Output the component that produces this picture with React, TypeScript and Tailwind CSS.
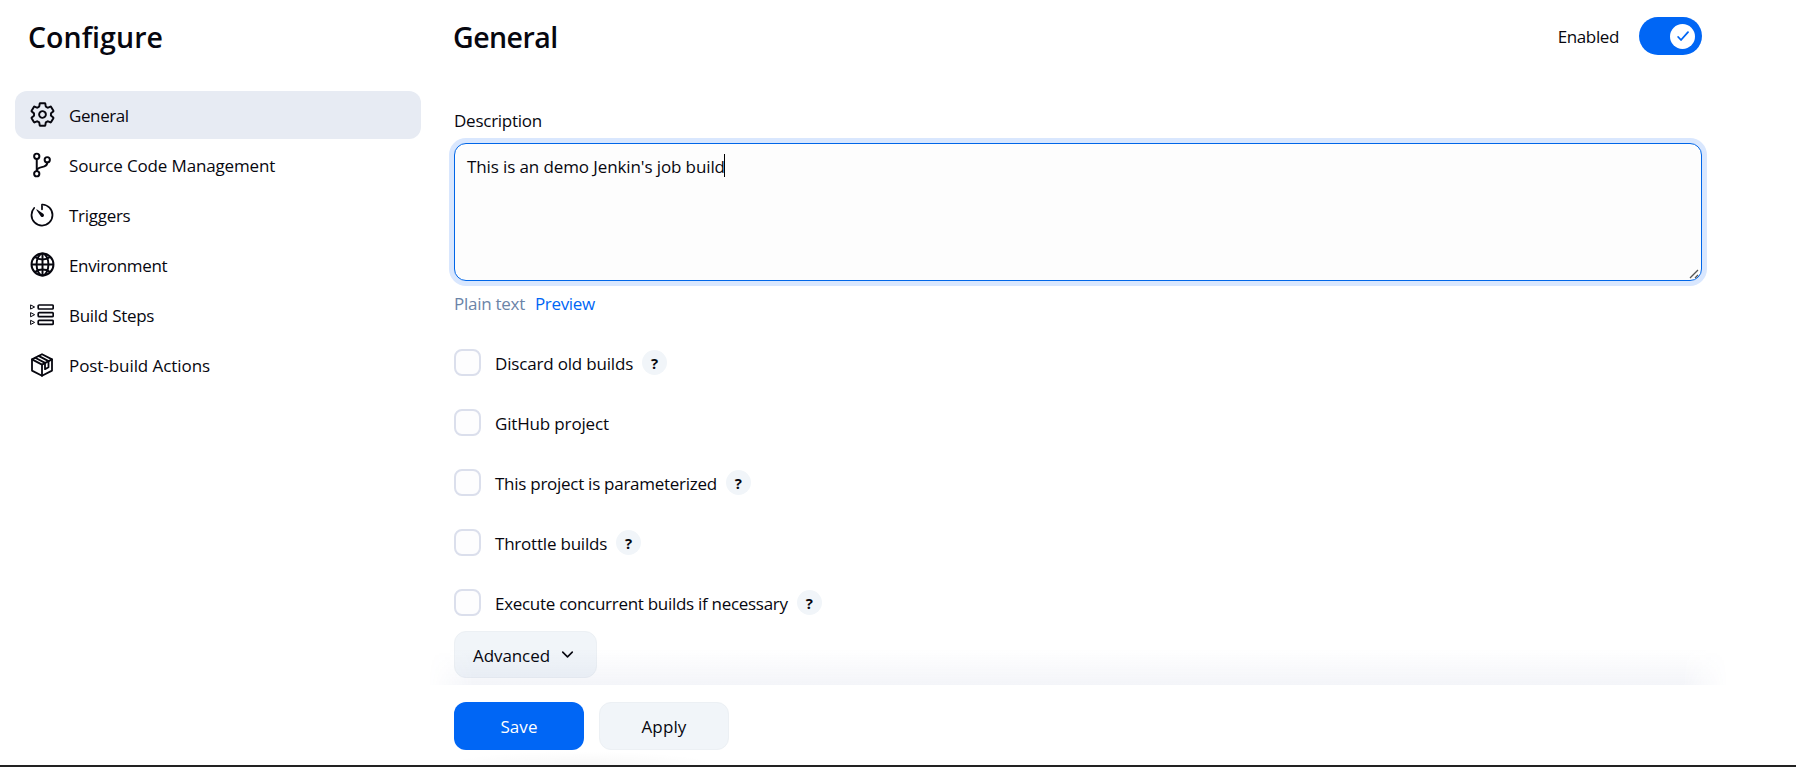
import type { ReactNode } from "react";
import {
  IoSettingsOutline,
  IoGitBranchOutline,
  IoTimerOutline,
  IoGlobeOutline,
  IoChevronDown,
} from "react-icons/io5";

function StepsIcon() {
  return (
    <svg viewBox="0 0 24 24" className="size-6 shrink-0" fill="none" stroke="currentColor" strokeWidth="1.7" strokeLinejoin="round">
      <rect x="8.2" y="2" width="15" height="4" rx="1" />
      <rect x="8.2" y="9.7" width="15" height="4" rx="1" />
      <rect x="8.2" y="17.4" width="15" height="4" rx="1" />
      <path strokeWidth="1" d="M.6 1.9v4.2L4.6 4zM.6 9.6v4.2l4-2.1zM.6 17.3v4.2l4-2.1z" />
    </svg>
  );
}

function PackageIcon() {
  return (
    <svg viewBox="0 0 24 24" className="size-6 shrink-0" fill="none" stroke="currentColor" strokeWidth="1.8" strokeLinejoin="round" strokeLinecap="round">
      <path d="M12 1.2 22 6.4v11.2l-10 5.2-10-5.2V6.4z" />
      <path d="m2 6.4 10 5.2 10-5.2M12 11.6v11.2" />
      <path d="m5.2 4.7 9.8 5.200v6.300l3.500-2V8.100L8.600 2.900" />
    </svg>
  );
}

type Item = { label: string; tracking: string; icon: ReactNode; active?: boolean };

const items: Item[] = [
  { label: "General", tracking: "tracking-[-0.4px]", icon: <IoSettingsOutline className="size-[27px] shrink-0 *:stroke-[37px]" />, active: true },
  { label: "Source Code Management", tracking: "tracking-[-0.15px]", icon: <IoGitBranchOutline className="size-[28px] shrink-0 *:stroke-[36px]" /> },
  { label: "Triggers", tracking: "tracking-[-0.28px]", icon: <IoTimerOutline className="size-[28px] shrink-0" /> },
  { label: "Environment", tracking: "tracking-[-0.35px]", icon: <IoGlobeOutline className="size-[27px] shrink-0 *:stroke-[37px]" /> },
  { label: "Build Steps", tracking: "tracking-[-0.28px]", icon: <StepsIcon /> },
  { label: "Post-build Actions", tracking: "tracking-[-0.07px]", icon: <PackageIcon /> },
];

const options = [
  { label: "Discard old builds", tracking: "tracking-[-0.18px]", help: true },
  { label: "GitHub project", tracking: "tracking-[-0.16px]", help: false },
  { label: "This project is parameterized", tracking: "tracking-[-0.27px]", help: true },
  { label: "Throttle builds", tracking: "tracking-[-0.21px]", help: true },
  { label: "Execute concurrent builds if necessary", tracking: "tracking-[-0.29px]", help: true },
];

function Sidebar() {
  return (
    <aside className="ml-[15px] w-[406px] shrink-0">
      <h1 className="mt-[17px] pl-[13px] text-[28.5px] leading-10 font-semibold tracking-[0.06px]">Configure</h1>
      <nav className="mt-[34px] flex flex-col gap-0.5">
        {items.map((item) => (
          <a
            key={item.label}
            className={`flex h-12 items-center rounded-xl pl-3.5 ${item.active ? "bg-[#e7ebf3]" : ""}`}
          >
            <span className="-mt-px flex w-[26px] justify-center">{item.icon}</span>
            <span className={`pt-0.5 pl-3.5 ${item.tracking}`}>{item.label}</span>
          </a>
        ))}
      </nav>
    </aside>
  );
}

function Option({ label, tracking, help }: { label: string; tracking: string; help: boolean }) {
  return (
    <div className="flex h-[27px] items-center">
      <span className="size-[27px] rounded-lg border-2 border-[#dbdfec] bg-[#fdfdfe]" />
      <span className={`pt-0.5 pl-3.5 ${tracking}`}>{label}</span>
      {help && (
        <span className="ml-[9px] flex size-[25px] items-center justify-center rounded-full bg-[#f1f5f9] text-[15px] font-bold">
          ?
        </span>
      )}
    </div>
  );
}

export default function App() {
  return (
    <div className="flex h-[767px] w-[1796px] flex-col overflow-hidden border-b-2 border-[#222] bg-white font-['Open_Sans','Noto_Sans',sans-serif] text-[17px] leading-6 text-[#07070f]">
      <div className="flex h-[685px] shrink-0 overflow-hidden">
        <Sidebar />
        <main className="ml-[33px] w-[1248px]">
          <header className="mt-[17px] flex h-[38px] items-center justify-between">
            <h2 className="-ml-px pt-0.5 text-[28.5px] leading-10 font-semibold tracking-[-0.55px]">General</h2>
            <div className="flex items-center">
              <span className="pt-0.5 tracking-[-0.38px]">Enabled</span>
              <span className="ml-5 flex h-[38px] w-[63px] items-center justify-end rounded-full bg-[#0066f5] pr-[7px]">
                <span className="flex size-[25px] items-center justify-center rounded-full bg-white text-[#0066f5]">
                  <svg viewBox="0 0 12 12" className="size-3" fill="none" stroke="currentColor" strokeWidth="1.8" strokeLinecap="round" strokeLinejoin="round">
                    <path d="M1.2 7 4 10l7-7.8" />
                  </svg>
                </span>
              </span>
            </div>
          </header>

          <div className="mt-[54px] tracking-[-0.25px]">Description</div>
          <div className="relative mt-2.5 flex h-[138px] rounded-xl border border-[#0066e8] bg-[#fdfdfd] px-3 pt-[11px] shadow-[0_0_0_5px_#d9e7fe]">
            <span className="tracking-[-0.11px]">This is an demo Jenkin's job build</span>
            <span className="-mt-px -ml-px h-[23px] w-px bg-black" />
            <svg viewBox="0 0 10 10" className="absolute right-0.5 bottom-px size-2.5" stroke="#555" strokeWidth="1.3">
              <path d="M1 9 9 1M6 9l3-3" />
            </svg>
          </div>
          <div className="mt-[11px] flex">
            <span className="tracking-[-0.27px] text-[#6b84a8]">Plain text</span>
            <a className="ml-2.5 tracking-[-0.34px] text-[#0066f5]">Preview</a>
          </div>

          <div className="mt-[33px] flex flex-col gap-[33px]">
            {options.map((option) => (
              <Option key={option.label} {...option} />
            ))}
          </div>

          <button className="mt-[15px] flex h-[47px] w-[143px] items-center rounded-xl border border-[#ecf0f4] bg-[#f1f5f9] pl-[18px]">
            <span className="pt-0.5 tracking-[-0.08px]">Advanced</span>
            <IoChevronDown className="ml-[9px] size-[17px]" />
          </button>
        </main>
      </div>

      <footer className="relative flex flex-1 gap-[15px] pt-[17px] pl-[454px]">
        <div className="pointer-events-none absolute -top-9 left-[428px] h-9 w-[1300px] bg-linear-to-t from-[#3c50960f] to-transparent mask-x-from-[calc(100%-45px)]" />
        <button className="h-12 w-[130px] rounded-xl bg-[#0066f5] pt-0.5 tracking-[0.05px] text-white">Save</button>
        <button className="h-12 w-[130px] rounded-xl border border-[#ecf0f4] bg-[#f1f5f9] pt-0.5 tracking-[0.13px]">Apply</button>
        <div className="absolute bottom-0 left-[440px] h-3.5 w-[280px] bg-radial-[at_50%_100%] from-[#00000008] to-transparent to-70%" />
      </footer>
    </div>
  );
}
